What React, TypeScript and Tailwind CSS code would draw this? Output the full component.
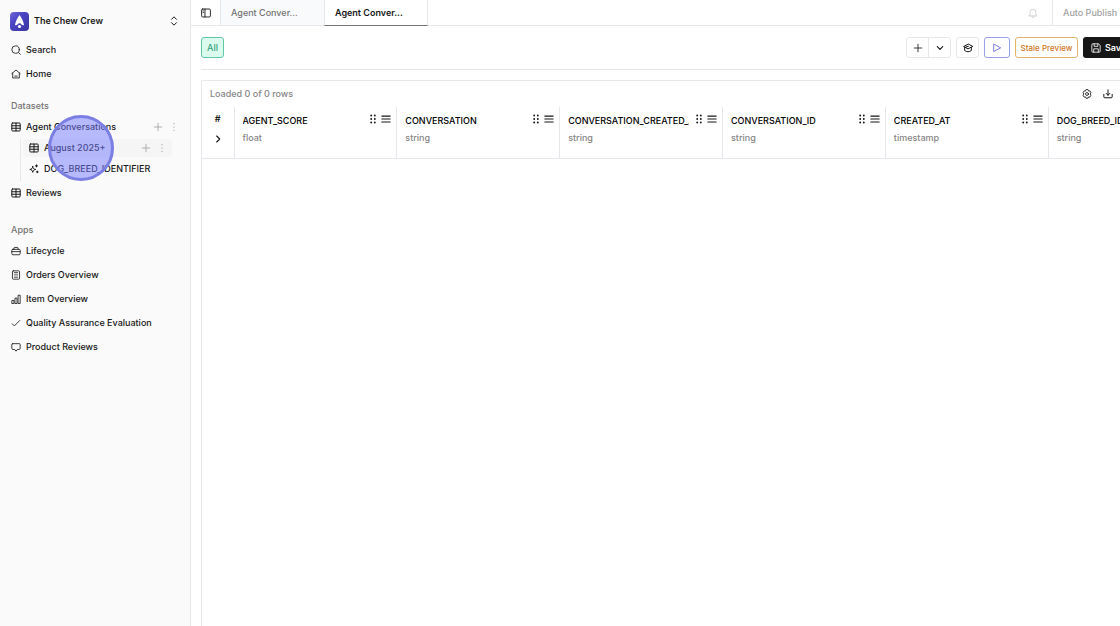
import type { ReactNode } from 'react';

type IconProps = { className?: string; children: ReactNode; stroke?: number };

function Icon({ className = 'size-[10px]', stroke = 2, children }: IconProps) {
  return (
    <svg
      viewBox="0 0 24 24"
      fill="none"
      stroke="currentColor"
      strokeWidth={stroke}
      strokeLinecap="round"
      strokeLinejoin="round"
      aria-hidden="true"
      className={`shrink-0 ${className}`}
    >
      {children}
    </svg>
  );
}

const SearchIcon = () => (
  <Icon>
    <circle cx="11" cy="11" r="9" />
    <path d="m18 18 4.5 4.5" />
  </Icon>
);

const HomeIcon = () => (
  <Icon>
    <path d="M2 11 12 2.5 22 11M4 9.5v12h16v-12" />
    <path d="M9 17h6" />
  </Icon>
);

const TableIcon = () => (
  <Icon stroke={2.4}>
    <rect x="2" y="2.5" width="20" height="19" rx="1.5" />
    <path d="M2 9h20M2 15h20M12 2.5v19" />
  </Icon>
);

const SparklesIcon = () => (
  <Icon stroke={2.4}>
    <path d="M9 6c.8 5 2.5 6.500 7 7-4.500.8-6.200 2.500-7 7-.8-4.500-2.500-6.200-7-7 4.500-.5 6.200-2 7-7Z" />
    <path d="M18 2v5M15.5 4.5h5M20 17v4M18 19h4" />
  </Icon>
);

const BriefcaseIcon = () => (
  <Icon>
    <rect x="2" y="8" width="20" height="13" rx="2.5" />
    <path d="M7 8V5a1.5 1.5 0 0 1 1.5-1.5h7A1.5 1.5 0 0 1 17 5v3M2 13.5h20" />
  </Icon>
);

const CalculatorIcon = () => (
  <Icon>
    <rect x="3.5" y="2" width="17" height="20" rx="2" />
    <path d="M8 6.5h8" />
    <path d="M8 11h8M8 14.5h8M8 18h8" opacity="0.6" />
  </Icon>
);

const BarsIcon = () => (
  <Icon>
    <path d="M2 22v-6.500h5V22zM9.500 22V10h5v12zM17 22V3h5v19z" />
  </Icon>
);

const CheckIcon = () => (
  <Icon>
    <path d="m3 14 5 5L21 6" />
  </Icon>
);

const CommentIcon = () => (
  <Icon>
    <path d="M4 4h16a2 2 0 0 1 2 2v9a3 3 0 0 1-3 3h-4l-3 4-3-4H5a3 3 0 0 1-3-3V6a2 2 0 0 1 2-2Z" />
  </Icon>
);

const PlusIcon = () => (
  <Icon>
    <path d="M12 3v18M3 12h18" />
  </Icon>
);

const MoreIcon = () => (
  <Icon stroke={3}>
    <path d="M12 4v.01M12 12v.01M12 20v.01" />
  </Icon>
);

const SidebarIcon = () => (
  <Icon stroke={2.2}>
    <rect x="1.5" y="2.5" width="21" height="19" rx="2.5" />
    <path d="M9.5 2.5v19M5 7h1M5 11h1" />
  </Icon>
);

const BellIcon = () => (
  <Icon stroke={2.4}>
    <path d="M5 17v-7a7 7 0 0 1 14 0v7l2.5 2h-19zM9 20a3 3 0 0 0 6 0" />
  </Icon>
);

const CapIcon = () => (
  <Icon stroke={2.4}>
    <path d="M12 3 1.5 8.5 12 14l10.5-5.5z" />
    <path d="M4 10.5V18c5 4 11 4 16 0v-7.500M7 9.500l6-1.500" />
  </Icon>
);

const SaveIcon = () => (
  <Icon>
    <path d="M2 4a2 2 0 0 1 2-2h14l4 4v14a2 2 0 0 1-2 2H4a2 2 0 0 1-2-2z" />
    <path d="M7.5 2v6h9V2M6.5 22v-8h11v8" />
  </Icon>
);

const GearIcon = () => (
  <Icon>
    <path d="m9.5 2-1 3-3.500-.5L2.500 9l2 3-2 3L5 19.500l3.500-.5 1 3h5l1-3 3.500.5 2.500-4.500-2-3 2-3L19 4.500l-3.500.5-1-3z" />
    <circle cx="12" cy="12" r="3.5" />
  </Icon>
);

const DownloadIcon = () => (
  <Icon stroke={2.4}>
    <path d="M12 2v13M7.5 10.5 12 15l4.5-4.500M2 13v6a2 2 0 0 0 2 2h16a2 2 0 0 0 2-2v-6" />
  </Icon>
);

const DragIcon = () => (
  <svg viewBox="0 0 6 10" fill="currentColor" aria-hidden="true" className="h-[10px] w-[6px]">
    {[1.5, 5, 8.5].map((y) => (
      <g key={y}>
        <circle cx="1.2" cy={y} r="0.95" />
        <circle cx="4.8" cy={y} r="0.95" />
      </g>
    ))}
  </svg>
);

const MenuIcon = () => (
  <Icon stroke={2.6}>
    <path d="M2 5h20M2 12h20M2 19h20" />
  </Icon>
);

const apps = [
  { label: 'Lifecycle', icon: BriefcaseIcon },
  { label: 'Orders Overview', icon: CalculatorIcon },
  { label: 'Item Overview', icon: BarsIcon },
  { label: 'Quality Assurance Evaluation', icon: CheckIcon },
  { label: 'Product Reviews', icon: CommentIcon },
];

const columns = [
  { name: 'AGENT_SCORE', type: 'float' },
  { name: 'CONVERSATION', type: 'string' },
  { name: 'CONVERSATION_CREATED_AT', type: 'string' },
  { name: 'CONVERSATION_ID', type: 'string' },
  { name: 'CREATED_AT', type: 'timestamp' },
  { name: 'DOG_BREED_IDENTIFIER', type: 'string' },
];

function NavItem({ icon: ItemIcon, label }: { icon: () => ReactNode; label: string }) {
  return (
    <a href="#" className="flex h-6 items-center gap-[5px] whitespace-nowrap">
      <ItemIcon />
      <span>{label}</span>
    </a>
  );
}

function RowActions({ label }: { label: string }) {
  return (
    <div className="ml-auto flex items-center gap-[6px] text-neutral-400">
      <button type="button" aria-label={`Add to ${label}`}>
        <PlusIcon />
      </button>
      <button type="button" aria-label={`More for ${label}`}>
        <MoreIcon />
      </button>
    </div>
  );
}

function Sidebar() {
  return (
    <aside className="w-[191px] shrink-0 border-r border-gray-200 bg-[#fafafa]">
      <button type="button" className="mt-[11px] flex h-5 w-full items-center gap-[5px] pr-[11px] pl-[10px]">
        <svg viewBox="0 0 38 38" className="size-[19px]" aria-hidden="true">
          <defs>
            <linearGradient id="logo" x1="0" y1="0" x2="1" y2="1">
              <stop offset="0" stopColor="#6f6ad6" />
              <stop offset="0.4" stopColor="#4a44c4" />
              <stop offset="1" stopColor="#3a34a0" />
            </linearGradient>
          </defs>
          <rect width="38" height="38" rx="8" fill="url(#logo)" />
          <path d="M19 6c4 5 8 13 9 20-2 1-4 0-5-1a4.500 4.500 0 0 0-8 0c-1 1-3 2-5 1C11 19 15 11 19 6Z" fill="#fff" />
          <circle cx="19" cy="29" r="3.2" fill="#fff" />
        </svg>
        <span className="font-semibold">The Chew Crew</span>
        <Icon className="ml-auto size-[10px]" stroke={2.4}>
          <path d="m6 8 6-6 6 6M6 16l6 6 6-6" />
        </Icon>
      </button>

      <nav className="mt-[7px] pl-[11px] font-medium">
        <NavItem icon={SearchIcon} label="Search" />
        <NavItem icon={HomeIcon} label="Home" />

        <h2 className="mt-[11px] flex h-[18px] items-center text-neutral-500">Datasets</h2>
        <div className="flex h-6 items-center pr-[11px]">
          <NavItem icon={TableIcon} label="Agent Conversations" />
          <RowActions label="Agent Conversations" />
        </div>
        <div className="ml-[9px] border-l border-gray-200 pl-[2px]">
          <div className="relative mr-[18px] flex h-[18px] items-center rounded bg-neutral-100 pr-[5px] pl-[6px]">
            <NavItem icon={TableIcon} label="August 2025+" />
            <RowActions label="August 2025+" />
            {/* click highlight */}
            <div className="pointer-events-none absolute -top-[24px] left-[25px] size-[66px] rounded-full border-3 border-[#7b7ee2] bg-[#7478ff]/50" />
          </div>
          <div className="flex h-6 items-center pl-[6px]">
            <NavItem icon={SparklesIcon} label="DOG_BREED_IDENTIFIER" />
          </div>
        </div>
        <NavItem icon={TableIcon} label="Reviews" />

        <h2 className="mt-4 flex h-[18px] items-center text-neutral-500">Apps</h2>
        {apps.map((app) => (
          <NavItem key={app.label} icon={app.icon} label={app.label} />
        ))}
      </nav>
    </aside>
  );
}

function TabBar() {
  return (
    <header className="flex h-[26px] border-b border-gray-200 font-medium">
      <button type="button" aria-label="Toggle sidebar" className="flex w-[29px] items-center justify-center">
        <SidebarIcon />
      </button>
      <button type="button" className="w-[104px] border-l border-gray-200 bg-slate-50 pl-[10px] text-left text-neutral-500">
        Agent Conver...
      </button>
      <button
        type="button"
        className="-mb-px w-[104px] border-x border-b border-x-gray-200 border-b-neutral-500 pl-[10px] text-left font-semibold"
      >
        Agent Conver...
      </button>
      <button type="button" aria-label="Notifications" className="ml-auto flex w-[38px] items-center justify-center text-neutral-300">
        <BellIcon />
      </button>
      <div className="flex w-[99px] items-center border-l border-gray-200 pl-[10px] text-neutral-400">Auto Publish</div>
    </header>
  );
}

function Toolbar() {
  return (
    <div className="mx-[10px] flex h-11 items-center gap-[5px] border-b border-gray-200">
      <button
        type="button"
        className="mr-auto h-[21px] w-[23px] rounded-[3px] border border-[#5fc9a4] bg-[#dcfbef] font-medium text-[#35a57c]"
      >
        All
      </button>
      <div className="flex h-[21px] rounded-[3px] border border-gray-200">
        <button type="button" aria-label="Add" className="flex w-[21px] items-center justify-center">
          <PlusIcon />
        </button>
        <button type="button" aria-label="Add options" className="flex w-[22px] items-center justify-center border-l border-gray-200">
          <Icon className="size-[8px]" stroke={3.4}>
            <path d="m4 8 8 8 8-8" />
          </Icon>
        </button>
      </div>
      <button
        type="button"
        aria-label="Learn"
        className="flex h-[21px] w-[23px] items-center justify-center rounded-[3px] border border-gray-200"
      >
        <CapIcon />
      </button>
      <button
        type="button"
        aria-label="Run"
        className="flex h-[21px] w-[26px] items-center justify-center rounded-[3px] border border-[#9a9fe6] text-[#6468d8]"
      >
        <Icon>
          <path d="M4 3.5v17L20 12z" />
        </Icon>
      </button>
      <button
        type="button"
        className="h-[21px] w-[63px] rounded-[3px] border border-[#e2b46c] text-[8px] font-medium whitespace-nowrap text-[#cf7526]"
      >
        Stale Preview
      </button>
      <button
        type="button"
        className="flex h-[21px] w-[58px] items-center gap-1 rounded-[3px] bg-neutral-900 pl-2 font-semibold text-white"
      >
        <SaveIcon />
        Save
      </button>
    </div>
  );
}

function DataTable() {
  return (
    <section className="mx-[10px] mt-[10px] flex-1 overflow-hidden rounded-t-[3px] border border-b-0 border-gray-200">
      <div className="flex h-[26px] items-center gap-[11px] pr-[27px] pl-2">
        <p className="mr-auto font-medium text-[#858585]">Loaded 0 of 0 rows</p>
        <button type="button" aria-label="Table settings">
          <GearIcon />
        </button>
        <button type="button" aria-label="Download">
          <DownloadIcon />
        </button>
      </div>
      <table className="w-[1009px] table-fixed border-b border-gray-200 text-left">
        <thead>
          <tr className="h-[51px] align-top">
            <th className="w-8 pt-[6px]">
              <div className="flex flex-col items-center gap-[10px]">
                <span className="leading-3 font-semibold">#</span>
                <button type="button" aria-label="Expand all">
                  <Icon className="size-[8px]" stroke={3.4}>
                    <path d="m8 3 9 9-9 9" />
                  </Icon>
                </button>
              </div>
            </th>
            {columns.map((column) => (
              <th key={column.name} className="border-l border-gray-200 pt-[7px] pr-[5px] pl-2">
                <div className="flex items-start gap-[5px]">
                  <span className="mr-[2px] flex-1 overflow-hidden leading-[14px] font-medium whitespace-nowrap text-black">
                    {column.name}
                  </span>
                  <DragIcon />
                  <button type="button" aria-label={`${column.name} menu`}>
                    <MenuIcon />
                  </button>
                </div>
                <div className="mt-1 leading-3 font-medium text-[#858585]">{column.type}</div>
              </th>
            ))}
          </tr>
        </thead>
      </table>
    </section>
  );
}

function App() {
  return (
    <div className="flex h-screen overflow-hidden bg-white font-['Inter',sans-serif] text-[9px] text-neutral-900">
      <Sidebar />
      <main className="flex min-w-[960px] flex-1 flex-col">
        <TabBar />
        <Toolbar />
        <DataTable />
      </main>
    </div>
  );
}

export default App;
